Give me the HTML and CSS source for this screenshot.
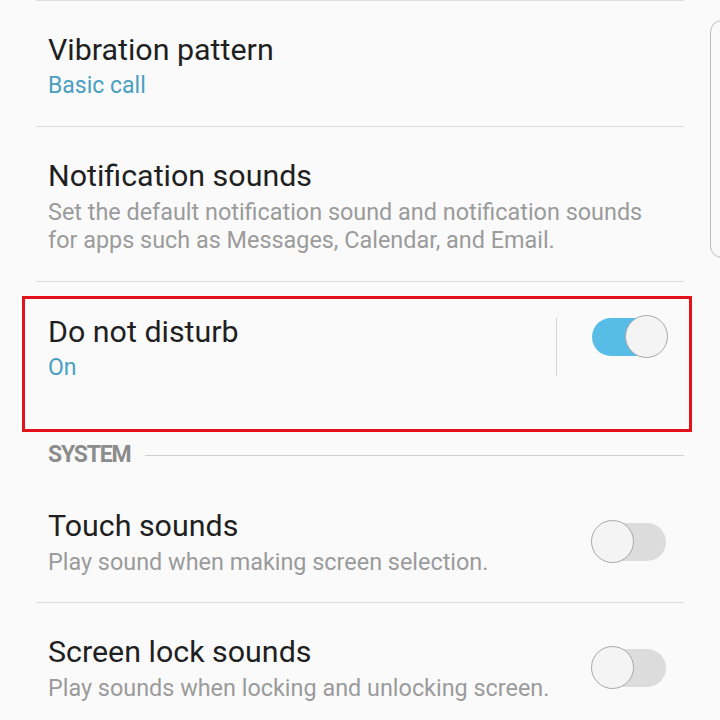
FILE: index.html
```html
<!DOCTYPE html>
<html lang="en">
<head>
    <meta charset="UTF-8">
    <meta name="viewport" content="width=device-width, initial-scale=1.0">
    <title>Sounds and vibration</title>
    <link rel="stylesheet" href="styles.css">
</head>
<body>
    <div class="scroll-hint"></div>
    <ul class="settings">
        <li class="item">
            <div class="text">
                <div class="title">Vibration pattern</div>
                <div class="value">Basic call</div>
            </div>
        </li>
        <li class="item">
            <div class="text">
                <div class="title">Notification sounds</div>
                <div class="desc">Set the default notification sound and notification sounds for apps such as Messages, Calendar, and Email.</div>
            </div>
        </li>
        <li class="item dnd">
            <div class="text">
                <div class="title">Do not disturb</div>
                <div class="value">On</div>
            </div>
            <span class="sep"></span>
            <span class="switch on"><span class="knob"></span></span>
            <div class="highlight"></div>
        </li>
        <li class="section">
            <span class="section-label">SYSTEM</span>
            <span class="section-line"></span>
        </li>
        <li class="item">
            <div class="text">
                <div class="title">Touch sounds</div>
                <div class="desc">Play sound when making screen selection.</div>
            </div>
            <span class="switch"><span class="knob"></span></span>
        </li>
        <li class="item">
            <div class="text">
                <div class="title">Screen lock sounds</div>
                <div class="desc">Play sounds when locking and unlocking screen.</div>
            </div>
            <span class="switch"><span class="knob"></span></span>
        </li>
    </ul>
</body>
</html>
```

FILE: styles.css
```css
html, body {
    margin: 0;
    padding: 0;
    height: 720px;
    overflow: hidden;
    background-color: #fafafa;
    font-family: Roboto, "Noto Sans", sans-serif;
}
.settings {
    list-style: none;
    margin: 0 36px;
    padding: 0;
    border-top: 1px solid #dedede;
}
.item {
    position: relative;
    display: flex;
    align-items: center;
    padding: 31px 18px 26px 12px;
    border-bottom: 1px solid #dedede;
}
.item:nth-child(2) {
    padding-top: 31px;
    padding-bottom: 27px;
}
.dnd {
    padding-top: 32px;
    padding-bottom: 51px;
    border-bottom: none;
    align-items: flex-start;
}
.dnd .sep, .dnd .switch {
    margin-top: 4px;
}
.text {
    flex: 1;
}
.title {
    font-size: 30.4px;
    line-height: 36px;
    color: #1f1f1f;
}
.value {
    margin-top: 4px;
    font-size: 23px;
    line-height: 28px;
    color: #4a9fc1;
}
.desc {
    margin-top: 4px;
    font-size: 23.4px;
    line-height: 28px;
    color: #9b9b9b;
    padding-right: 10px;
}
.sep {
    width: 1px;
    height: 58px;
    background-color: #d2d2d2;
    margin-right: 35px;
}
.switch {
    position: relative;
    width: 74px;
    height: 38px;
    border-radius: 19px;
    background-color: #dcdcdc;
    flex-shrink: 0;
}
.switch.on {
    background-color: #58bde6;
}
.knob {
    position: absolute;
    top: -3px;
    left: -1px;
    width: 41px;
    height: 41px;
    border-radius: 50%;
    background-color: #f4f4f4;
    border: 1.5px solid #a8a8a8;
}
.switch.on .knob {
    left: auto;
    right: -2px;
}
.highlight {
    position: absolute;
    top: 14px;
    left: -14px;
    right: -8px;
    height: 130px;
    border: 3px solid #e3121b;
}
.section {
    display: flex;
    align-items: center;
    height: 44px;
    padding-left: 12px;
}
.section-label {
    font-weight: bold;
    font-size: 23px;
    line-height: 24px;
    letter-spacing: -1.2px;
    color: #8c8c8c;
    margin-right: 14px;
}
.section-line {
    flex: 1;
    height: 1px;
    background-color: #d0d0d0;
}
.scroll-hint {
    position: absolute;
    top: 20px;
    left: 710px;
    width: 30px;
    height: 236px;
    border: 1.5px solid #bdbdbd;
    border-radius: 12px;
}
```
